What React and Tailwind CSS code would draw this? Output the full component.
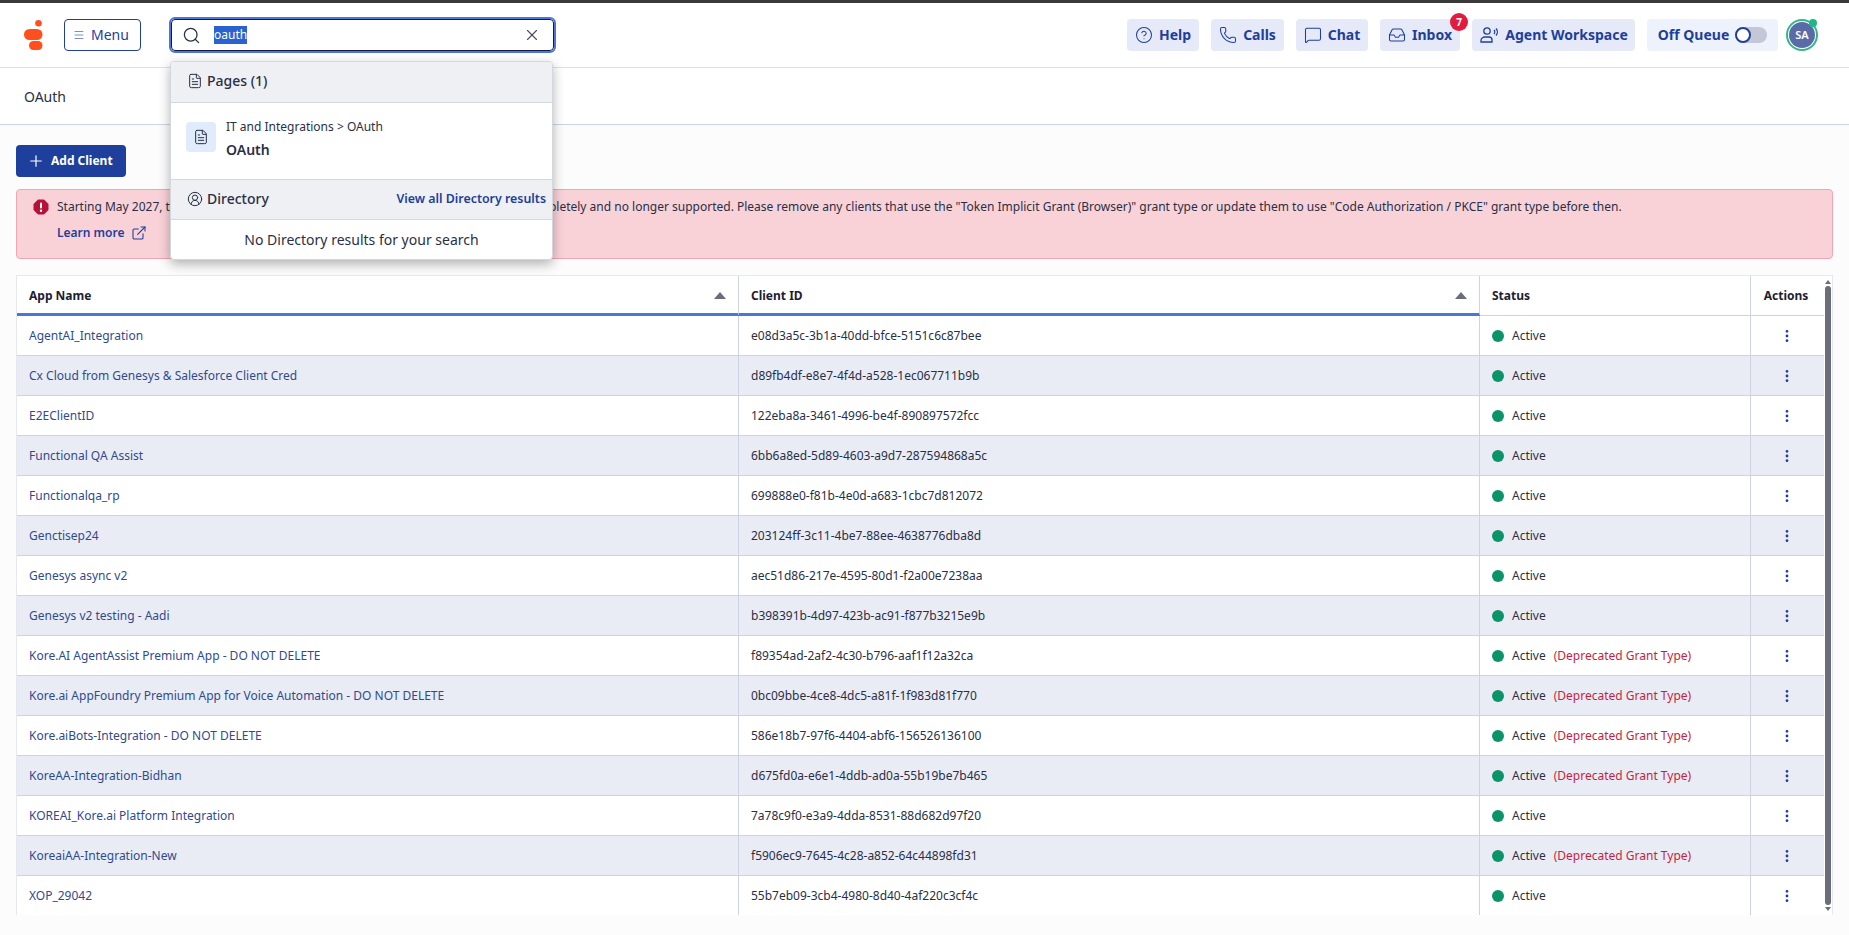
import { CircleHelp, Phone, MessageSquare, Inbox, Search, X, Menu, FileText, CircleUserRound, Plus, ExternalLink, EllipsisVertical } from 'lucide-react';

const clients = [
  { name: 'AgentAI_Integration', id: 'e08d3a5c-3b1a-40dd-bfce-5151c6c87bee' },
  { name: 'Cx Cloud from Genesys & Salesforce Client Cred', id: 'd89fb4df-e8e7-4f4d-a528-1ec067711b9b' },
  { name: 'E2EClientID', id: '122eba8a-3461-4996-be4f-890897572fcc' },
  { name: 'Functional QA Assist', id: '6bb6a8ed-5d89-4603-a9d7-287594868a5c' },
  { name: 'Functionalqa_rp', id: '699888e0-f81b-4e0d-a683-1cbc7d812072' },
  { name: 'Genctisep24', id: '203124ff-3c11-4be7-88ee-4638776dba8d' },
  { name: 'Genesys async v2', id: 'aec51d86-217e-4595-80d1-f2a00e7238aa' },
  { name: 'Genesys v2 testing - Aadi', id: 'b398391b-4d97-423b-ac91-f877b3215e9b' },
  { name: 'Kore.AI AgentAssist Premium App - DO NOT DELETE', id: 'f89354ad-2af2-4c30-b796-aaf1f12a32ca', deprecated: true },
  { name: 'Kore.ai AppFoundry Premium App for Voice Automation - DO NOT DELETE', id: '0bc09bbe-4ce8-4dc5-a81f-1f983d81f770', deprecated: true },
  { name: 'Kore.aiBots-Integration - DO NOT DELETE', id: '586e18b7-97f6-4404-abf6-156526136100', deprecated: true },
  { name: 'KoreAA-Integration-Bidhan', id: 'd675fd0a-e6e1-4ddb-ad0a-55b19be7b465', deprecated: true },
  { name: 'KOREAI_Kore.ai Platform Integration', id: '7a78c9f0-e3a9-4dda-8531-88d682d97f20' },
  { name: 'KoreaiAA-Integration-New', id: 'f5906ec9-7645-4c28-a852-64c44898fd31', deprecated: true },
  { name: 'XOP_29042', id: '55b7eb09-3cb4-4980-8d40-4af220c3cf4c' },
];

const navButtons = [
  { label: 'Help', icon: CircleHelp, width: 'w-[72px]' },
  { label: 'Calls', icon: Phone, width: 'w-[73px]' },
  { label: 'Chat', icon: MessageSquare, width: 'w-[72px]' },
  { label: 'Inbox', icon: Inbox, width: 'w-[80px]' },
];

const SortArrow = () => (
  <svg width="12" height="7" viewBox="0 0 12 7" className="fill-[#6b6e7a]">
    <path d="M6 0 L12 7 L0 7 Z" />
  </svg>
);

const AgentIcon = () => (
  <svg width="20" height="20" viewBox="0 0 20 20" fill="none" stroke="currentColor" strokeWidth="1.3">
    <circle cx="8" cy="6" r="3.2" />
    <path d="M2 17v-1.5C2 13.5 4 12 6 12h4c2 0 3 1 3 3v2z" />
    <path d="M15 5c1 1 1 3 0 4M17 3.5c1.8 2 1.8 5 0 7" />
  </svg>
);

const AlertIcon = () => (
  <svg width="16" height="16" viewBox="0 0 16 16" className="shrink-0">
    <path d="M5 0.5h6L15.5 5v6L11 15.5H5L0.5 11V5z" fill="#b5123a" />
    <rect x="7" y="3.5" width="2" height="6" rx="1" fill="#fff" />
    <circle cx="8" cy="11.7" r="1.2" fill="#fff" />
  </svg>
);

const Logo = () => (
  <svg width="19" height="30" viewBox="0 0 19 30" className="fill-[#ff4f1f]">
    <circle cx="14.5" cy="3.3" r="3.3" />
    <rect x="0" y="9" width="18.5" height="11" rx="5.5" />
    <rect x="5" y="21" width="13.5" height="9" rx="4.5" />
  </svg>
);

const SearchDropdown = () => (
  <div className="absolute left-[170px] top-[61px] z-20 w-[383px] overflow-hidden rounded border border-[#d5d7de] bg-white text-[#2a2f45] shadow-[0_4px_12px_rgba(0,0,0,0.3)]">
    <div className="flex h-[41px] items-center gap-[4px] border-b border-[#d5d7de] bg-[#eff0f4] pb-[3px] pl-[16px] text-sm font-medium">
      <FileText size={16} strokeWidth={1.5} />
      Pages (1)
    </div>
    <div className="flex h-[76px] items-start gap-[10px] px-[15px] pt-[16px]">
      <div className="mt-[3px] flex h-[30px] w-[30px] items-center justify-center rounded bg-[#e0ebfb]">
        <FileText size={16} strokeWidth={1.5} />
      </div>
      <div>
        <div className="text-xs leading-[16px]">IT and Integrations &gt; OAuth</div>
        <div className="mt-[7px] text-sm leading-[16px] font-semibold">OAuth</div>
      </div>
    </div>
    <div className="flex h-[41px] items-center justify-between border-y border-[#d5d7de] bg-[#eff0f4] pr-[6px] pl-[16px]">
      <div className="flex items-center gap-[4px] pb-[1px] text-sm font-medium">
        <CircleUserRound size={16} strokeWidth={1.5} />
        Directory
      </div>
      <a className="text-[12.4px] font-semibold text-[#1e3f9c]">View all Directory results</a>
    </div>
    <div className="flex h-[39px] items-center justify-center text-sm">No Directory results for your search</div>
  </div>
);

const Header = () => (
  <header className="flex h-[65px] items-center border-b border-[#d9dfec] bg-white pr-[31px] pl-6">
    <Logo />
    <button className="ml-[21px] flex h-[32px] w-[77px] items-center gap-[6px] rounded border border-[#1e3f9c] pl-[8px] text-sm text-[#1e3f9c]">
      <Menu size={12} className="text-[#7d90c7]" />
      Menu
    </button>
    <div className="ml-[30px] flex h-[32px] w-[383px] items-center rounded-sm border border-[#111a4b] bg-white pr-[12px] pl-[10px] outline-2 outline-[#4f74d9]">
      <Search size={19} className="text-[#2a2f45]" strokeWidth={1.6} />
      <span className="ml-[13px] bg-[#2a62d0] text-xs leading-[18px] text-white">oauth</span>
      <X size={18} className="ml-auto text-[#4a4e5c]" strokeWidth={1.5} />
    </div>
    <div className="ml-auto flex items-center gap-3">
      {navButtons.map((btn) => (
        <div key={btn.label} className={`relative flex h-[32px] ${btn.width} items-center justify-center gap-[6px] rounded bg-[#e6e9f7] text-sm font-bold text-[#1e3f9c]`}>
          <btn.icon size={18} strokeWidth={1.4} />
          {btn.label}
          {btn.label === 'Inbox' && (
            <span className="absolute top-[-6px] right-[-8px] flex h-[18px] w-[18px] items-center justify-center rounded-full bg-[#e11d3f] text-[10px] font-bold text-white">7</span>
          )}
        </div>
      ))}
      <div className="flex h-[32px] w-[163px] items-center justify-center gap-[6px] rounded bg-[#e6e9f7] text-sm font-bold text-[#1e3f9c]">
        <AgentIcon />
        Agent Workspace
      </div>
      <div className="flex h-[32px] w-[131px] items-center justify-center gap-[6px] rounded bg-[#eef2fd] text-sm font-bold text-[#1e3f9c]">
        Off Queue
        <span className="flex h-4 w-8 items-center rounded-full bg-[#c3c7d6]">
          <span className="h-4 w-4 rounded-full border-2 border-[#1e3f9c] bg-white"></span>
        </span>
      </div>
      <div className="relative ml-[-4px] flex h-[32px] w-[32px] rounded-full border-2 border-[#35b58a] bg-white p-[1px]">
        <span className="flex flex-1 items-center justify-center rounded-full bg-[#5a6ca8] text-[11px] font-semibold text-white">SA</span>
        <span className="absolute top-[-2px] right-[-1px] h-[8px] w-[8px] rounded-full bg-[#1fb884]"></span>
      </div>
    </div>
  </header>
);

const Alert = () => (
  <div className="mt-3 h-[70px] rounded border border-[#f0a6b2] bg-[#f9d2d8] pt-[7px] pr-4 pl-4 text-xs text-[#2a2f45]">
    <div className="flex items-center gap-[8px] leading-[20px]">
      <AlertIcon />
      <span>
        Starting May 2027, the "Token Implicit Grant (Browser)" grant type will be removed completely and no longer supported. Please remove any clients that use the "Token Implicit Grant (Browser)" grant type or update them to use "Code Authorization / PKCE" grant type before then.
      </span>
    </div>
    <a className="mt-[8px] ml-[24px] flex items-center gap-[6px] font-semibold text-[#1e3f9c]">
      Learn more
      <ExternalLink size={16} strokeWidth={1.6} />
    </a>
  </div>
);

const ClientRow = ({ client, index }) => (
  <div className={`grid h-[40px] grid-cols-[722px_741px_271px_73px] border-b border-[#cdd3e3] text-xs ${index % 2 ? 'bg-[#e9ecf5]' : 'bg-white'}`}>
    <div className="flex items-center border-r border-[#cdd3e3] pl-3 text-[#2f4b8f]">{client.name}</div>
    <div className="flex items-center border-r border-[#cdd3e3] pl-3 text-[#2a2f45]">{client.id}</div>
    <div className="flex items-center border-r border-[#cdd3e3] pl-3 text-[#2a2f45]">
      <span className="h-3 w-3 rounded-full bg-[#0b9468]"></span>
      <span className="ml-2">Active</span>
      {client.deprecated && <span className="ml-2 text-[#c81e3e]">(Deprecated Grant Type)</span>}
    </div>
    <div className="flex items-center justify-center pr-[1px] text-[#1e3f9c]">
      <EllipsisVertical size={16} strokeWidth={2.2} />
    </div>
  </div>
);

const ClientTable = () => (
  <div className="mt-[16px] flex h-[640px] overflow-hidden border-x border-t border-[#e6e8f0] bg-white">
    <div className="w-[1807px] shrink-0">
      <div className="grid h-[40px] grid-cols-[722px_741px_271px_73px] text-xs font-bold text-[#1d2033]">
        <div className="flex items-center justify-between border-r border-b-[3px] border-r-[#cdd3e3] border-b-[#4f74d9] pt-[2px] pr-3 pl-3">
          App Name
          <SortArrow />
        </div>
        <div className="flex items-center justify-between border-r border-b-[3px] border-r-[#cdd3e3] border-b-[#4f74d9] pt-[2px] pr-3 pl-3">
          Client ID
          <SortArrow />
        </div>
        <div className="flex items-center border-r border-b border-[#cdd3e3] pl-3">Status</div>
        <div className="flex items-center justify-center border-b border-[#cdd3e3] pr-[3px]">Actions</div>
      </div>
      {clients.map((client, index) => (
        <ClientRow key={client.id} client={client} index={index} />
      ))}
    </div>
    <div className="flex flex-1 flex-col items-center py-[4px]">
      <div className="h-0 w-0 border-x-[3px] border-b-[4px] border-x-transparent border-b-[#6b6e7a]"></div>
      <div className="mt-[2px] w-[6px] flex-1 rounded-full bg-[#6b6e7a]"></div>
      <div className="mt-[2px] h-0 w-0 border-x-[3px] border-t-[4px] border-x-transparent border-t-[#6b6e7a]"></div>
    </div>
  </div>
);

export default function App() {
  return (
    <div className="relative h-[935px] overflow-hidden bg-[#fcfcfc] font-['Noto_Sans',sans-serif]">
      <div className="h-[3px] bg-[#3a3a3c]"></div>
      <Header />
      <div className="flex h-[57px] items-center border-b border-[#cdd3e3] bg-white pt-[1px] pl-6 text-sm text-[#2a2f45]">OAuth</div>
      <main className="px-4 pt-5">
        <button className="flex h-[32px] w-[110px] items-center gap-[6px] rounded bg-[#1e3f9c] pl-[11px] text-xs font-bold text-white">
          <Plus size={18} strokeWidth={1.6} />
          Add Client
        </button>
        <Alert />
        <ClientTable />
      </main>
      <SearchDropdown />
    </div>
  );
}
